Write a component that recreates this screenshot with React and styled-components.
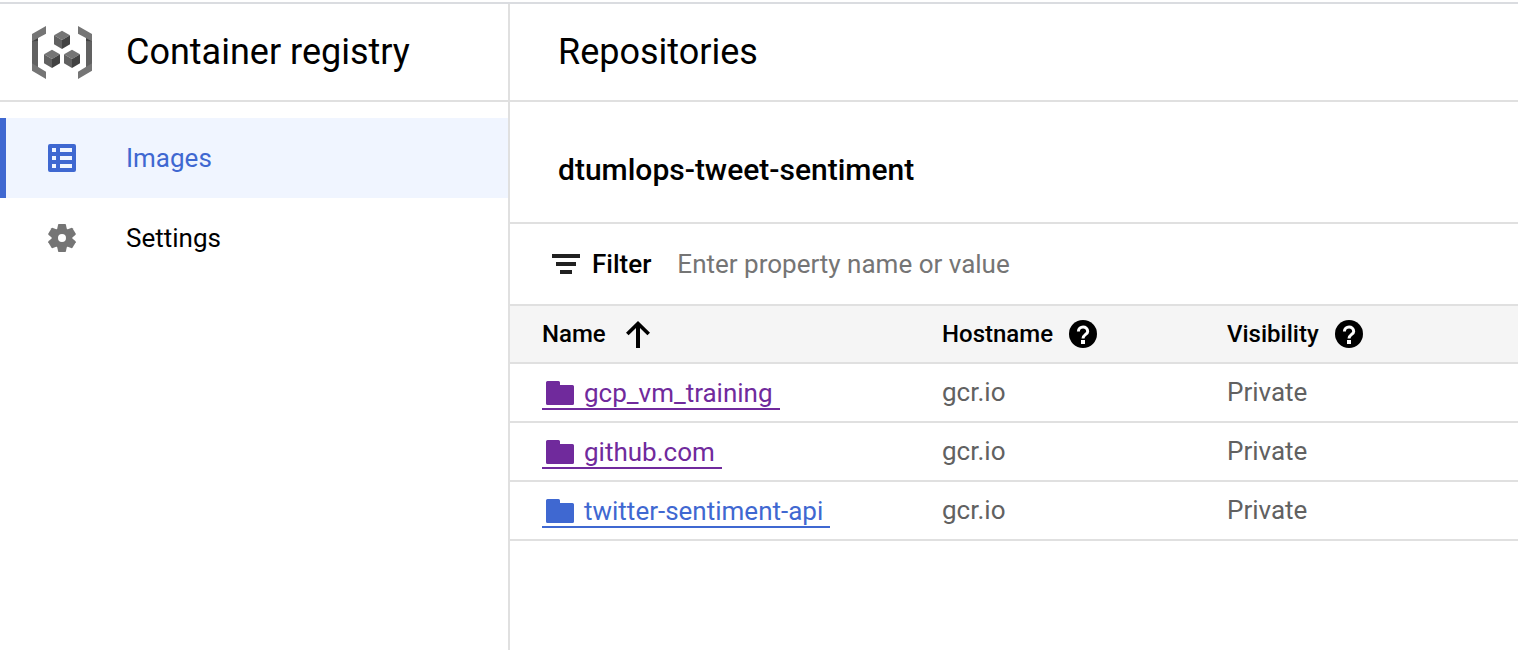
import React from 'react';
import styled, { createGlobalStyle, css } from 'styled-components';

const line = '#e0e0e0';
const blue = '#3f68d1';
const purple = '#702a9c';

const GlobalStyle = createGlobalStyle`
  *, *::before, *::after { box-sizing: border-box; }
  body {
    margin: 0;
    background: #fff;
    color: #000;
    font-family: Roboto, "Liberation Sans", sans-serif;
    font-size: 26px;
    line-height: 32px;
  }
  svg { display: block; flex: none; }
`;

const Page = styled.div`
  display: grid;
  grid-template-columns: 510px minmax(0, 1fr);
  min-height: calc(100vh - 2px);
  margin-top: 2px;
  border-top: 2px solid #dadce0;
`;

const Sidebar = styled.aside`
  border-right: 2px solid ${line};
`;

const Header = styled.header`
  display: flex;
  align-items: center;
  height: 98px;
  padding-left: ${(p) => p.$inset};
  border-bottom: 2px solid ${line};
`;

const Title = styled.h1`
  margin: 0;
  font-size: 36px;
  line-height: 48px;
  font-weight: 400;
`;

const ProductTitle = styled(Title).attrs({ as: 'div' })`
  margin-left: 34px;
`;

const Nav = styled.nav`
  padding-top: 16px;
`;

const NavLink = styled.a`
  display: flex;
  align-items: center;
  gap: 50px;
  height: 80px;
  padding-left: 42px;
  border-left: 6px solid transparent;
  color: #000;
  text-decoration: none;
  svg { color: #757575; }
  ${(p) =>
    p.$active &&
    css`
      background: #f0f5ff;
      border-left-color: ${blue};
      &, svg { color: ${blue}; }
    `}
`;

const Main = styled.main`
  min-width: 0;
`;

const ProjectBar = styled.div`
  display: flex;
  align-items: center;
  height: 122px;
  padding: 16px 48px 0;
  border-bottom: 2px solid ${line};
`;

const ProjectName = styled.h2`
  margin: 0;
  font-size: 30px;
  line-height: 40px;
  font-weight: 500;
`;

const FilterBar = styled.div`
  display: flex;
  align-items: center;
  height: 82px;
  padding: 0 42px;
  border-bottom: 2px solid ${line};
`;

const FilterLabel = styled.label`
  display: flex;
  align-items: center;
  gap: 12px;
  font-weight: 500;
`;

const FilterInput = styled.input`
  flex: 1;
  min-width: 0;
  margin-left: 26px;
  padding: 0;
  border: 0;
  outline: 0;
  background: transparent;
  font: inherit;
  color: #000;
  &::placeholder { color: #757575; opacity: 1; }
`;

const Table = styled.table`
  width: 100%;
  border-collapse: separate;
  border-spacing: 0;
  table-layout: fixed;
`;

const Col = styled.col`
  width: ${(p) => p.$width};
`;

const HeadCell = styled.th`
  height: 58px;
  padding: 0 0 0 ${(p) => (p.$first ? '32px' : '0')};
  background: #f5f5f5;
  border-bottom: 2px solid ${line};
  font-size: 24px;
  font-weight: 500;
  text-align: left;
`;

const HeadContent = styled.div`
  display: flex;
  align-items: center;
  gap: 16px;
`;

const PlainButton = styled.button`
  display: flex;
  align-items: center;
  gap: 20px;
  padding: 0;
  border: 0;
  background: none;
  font: inherit;
  color: inherit;
  cursor: pointer;
`;

const Cell = styled.td`
  height: 59px;
  padding: 0 0 2px ${(p) => (p.$first ? '32px' : '0')};
  border-bottom: 2px solid ${line};
  color: #616161;
`;

const RepoLink = styled.a`
  display: flex;
  align-items: center;
  gap: 10px;
  width: max-content;
  height: 32px;
  margin-top: 5px;
  padding: 0 7px 0 4px;
  border-bottom: 2px solid currentColor;
  color: ${(p) => (p.$visited ? purple : blue)};
  text-decoration: none;
`;

const RegistryLogo = () => (
  <svg width="60" height="53" viewBox="96 78 180 159" aria-hidden="true">
    <path fill="#616161" d="M96 110h18v96H96zM258 110h18v96h-18z" />
    <path fill="#424242" d="M96 124l18-10v9zM276 124l-18-10v9z" />
    <path
      fill="#757575"
      d="M96 102l42-24v23l-42 23zM276 102l-42-24v23l42 23zM96 190l42 25v22l-42-25zM276 190l-42 25v22l42-25z"
    />
    {[[186, 92], [156, 149], [216, 149]].map(([x, y]) => (
      <g key={x} transform={`translate(${x} ${y})`}>
        <path fill="#757575" d="M0 0l24 14L0 28l-24-14z" />
        <path fill="#616161" d="M-24 14L0 28v27l-24-14z" />
        <path fill="#424242" d="M24 14L0 28v27l24-14z" />
      </g>
    ))}
  </svg>
);

const ListIcon = () => (
  <svg width="28" height="28" viewBox="0 0 28 28" fill="currentColor" aria-hidden="true">
    <path
      fillRule="evenodd"
      d="M2 0h24a2 2 0 0 1 2 2v24a2 2 0 0 1-2 2H2a2 2 0 0 1-2-2V2a2 2 0 0 1 2-2zM4 4v4h4V4zM12 4v4h12V4zM4 12v4h4v-4zM12 12v4h12v-4zM4 20v4h4v-4zM12 20v4h12v-4z"
    />
  </svg>
);

const GearIcon = () => (
  <svg width="28" height="28" viewBox="-14 -14 28 28" fill="currentColor" aria-hidden="true">
    <path
      fillRule="evenodd"
      d="M0-10.300a10.300 10.300 0 1 0 0 20.600a10.300 10.300 0 1 0 0-20.600zM0-4a4 4 0 1 1 0 8a4 4 0 1 1 0-8z"
    />
    {[0, 60, 120, 180, 240, 300].map((a) => (
      <path key={a} transform={`rotate(${a})`} d="M-3.300-14H3.300L3.900-13.500L5-8H-5L-3.900-13.500z" />
    ))}
  </svg>
);

const FilterIcon = () => (
  <svg width="28" height="20" viewBox="0 0 28 20" fill="#212121" aria-hidden="true">
    <path d="M0 0h28v4H0zM4 8h20v4H4zM8 16h12v4H8z" />
  </svg>
);

const ArrowUpIcon = () => (
  <svg width="24" height="28" viewBox="0 0 24 28" fill="currentColor" aria-hidden="true">
    <path d="M12 1L0 12.700l2.600 2.600L10 8v20h4V8l7.400 7.300 2.600-2.600z" />
  </svg>
);

const HelpIcon = () => (
  <svg width="28" height="28" viewBox="0 0 28 28" aria-hidden="true">
    <circle cx="14" cy="14" r="14" fill="currentColor" />
    <path
      d="M9.400 11.600C9.400 5.600 18.700 5.600 18.700 11.400C18.700 14.400 14 14.600 14 18.600"
      fill="none"
      stroke="#fff"
      strokeWidth="3"
    />
    <path d="M12 20h4v4h-4z" fill="#fff" />
  </svg>
);

const FolderIcon = () => (
  <svg width="28" height="24" viewBox="0 0 28 24" fill="currentColor" aria-hidden="true">
    <path d="M1.500 0h11A1.500 1.500 0 0 1 14 1.500V4h12.500A1.500 1.500 0 0 1 28 5.500v17a1.500 1.500 0 0 1-1.500 1.500h-25A1.500 1.500 0 0 1 0 22.500v-21A1.500 1.500 0 0 1 1.500 0z" />
  </svg>
);

const repositories = [
  { name: 'gcp_vm_training', visited: true },
  { name: 'github.com', visited: true },
  { name: 'twitter-sentiment-api', visited: false },
];

export default function App() {
  return (
    <>
      <GlobalStyle />
      <Page>
        <Sidebar>
          <Header $inset="32px">
            <RegistryLogo />
            <ProductTitle>Container registry</ProductTitle>
          </Header>
          <Nav>
            <NavLink href="#images" $active aria-current="page">
              <ListIcon />
              Images
            </NavLink>
            <NavLink href="#settings">
              <GearIcon />
              Settings
            </NavLink>
          </Nav>
        </Sidebar>
        <Main>
          <Header $inset="48px">
            <Title>Repositories</Title>
          </Header>
          <ProjectBar>
            <ProjectName>dtumlops-tweet-sentiment</ProjectName>
          </ProjectBar>
          <FilterBar>
            <FilterLabel htmlFor="filter">
              <FilterIcon />
              Filter
            </FilterLabel>
            <FilterInput id="filter" type="text" placeholder="Enter property name or value" />
          </FilterBar>
          <Table>
            <colgroup>
              <Col $width="432px" />
              <Col $width="285px" />
              <Col />
            </colgroup>
            <thead>
              <tr>
                <HeadCell scope="col" $first aria-sort="ascending">
                  <PlainButton type="button">
                    Name
                    <ArrowUpIcon />
                  </PlainButton>
                </HeadCell>
                {['Hostname', 'Visibility'].map((label) => (
                  <HeadCell scope="col" key={label}>
                    <HeadContent>
                      {label}
                      <PlainButton type="button" aria-label={`About ${label}`}>
                        <HelpIcon />
                      </PlainButton>
                    </HeadContent>
                  </HeadCell>
                ))}
              </tr>
            </thead>
            <tbody>
              {repositories.map((repo) => (
                <tr key={repo.name}>
                  <Cell $first>
                    <RepoLink href={`#${repo.name}`} $visited={repo.visited}>
                      <FolderIcon />
                      {repo.name}
                    </RepoLink>
                  </Cell>
                  <Cell>gcr.io</Cell>
                  <Cell>Private</Cell>
                </tr>
              ))}
            </tbody>
          </Table>
        </Main>
      </Page>
    </>
  );
}
